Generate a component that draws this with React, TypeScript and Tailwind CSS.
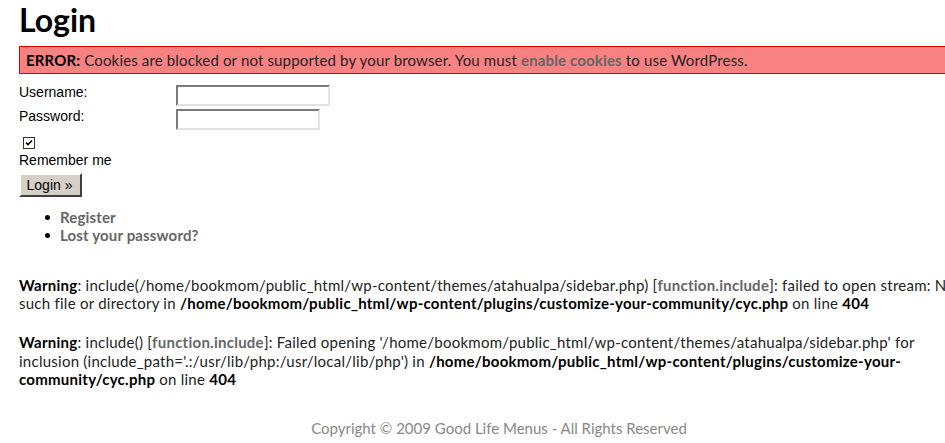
import React from 'react';

const body = { fontFamily: 'Lato, "Open Sans", sans-serif' };
const arial = { fontFamily: '"Liberation Sans", Arial, sans-serif' };

const inputCls =
    'h-[21px] bg-white border-2 border-t-[#7a7a7a] border-l-[#7a7a7a] border-b-[#e3e3e3] border-r-[#e3e3e3]';

const App: React.FC = () => {
    return (
        <div className="w-[945px] h-[443px] overflow-hidden bg-white text-[#222] tracking-[0.15px]" style={body}>
            <div className="w-[960px] ml-[19px]">

                {/* Title */}
                <h1 className="pt-[1px] text-[32px] leading-[37px] font-bold text-black tracking-normal">Login</h1>

                {/* Error */}
                <div className="mt-[8px] h-[28px] border border-[#e00000] bg-[#f88282] pl-[6px] text-[15px] leading-[26px] whitespace-nowrap">
                    <b className="text-black">ERROR:</b> Cookies are blocked or not supported by your browser. You must{' '}
                    <b className="text-[#666]">enable cookies</b> to use WordPress.
                </div>

                {/* Form */}
                <div
                    className="mt-[11px] grid grid-cols-[157px_auto] gap-y-[3px] text-[14px] leading-[14px] text-black tracking-normal"
                    style={arial}
                >
                    <div>Username:</div>
                    <div className={`${inputCls} w-[154px]`} />
                    <div>Password:</div>
                    <div className={`${inputCls} w-[144px]`} />
                </div>

                <div className="mt-[7px] ml-[4px] w-[12px] h-[12px] border border-[#333] bg-white flex items-center justify-center">
                    <svg width="8" height="8" viewBox="0 0 8 8">
                        <path d="M1 3.5 L3 5.5 L7 1.5" stroke="#000" strokeWidth="1.6" fill="none" />
                    </svg>
                </div>

                <div className="mt-[2px] text-[14px] leading-[18px] text-black tracking-normal" style={arial}>Remember me</div>

                <button
                    className="mt-[4px] w-[63px] h-[24px] bg-[#d4d0c8] border-2 border-t-white border-l-white border-b-[#404040] border-r-[#404040] text-[14px] text-black pr-[2px] tracking-normal"
                    style={arial}
                >
                    Login »
                </button>

                {/* Links */}
                <ul className="mt-[11px] text-[15px] leading-[18px] font-bold text-[#666]">
                    {['Register', 'Lost your password?'].map((item) => (
                        <li key={item} className="flex items-center">
                            <span className="ml-[26px] w-[5px] h-[5px] rounded-full bg-black" />
                            <span className="ml-[10px]">{item}</span>
                        </li>
                    ))}
                </ul>

                {/* PHP warnings */}
                <p className="mt-[32px] text-[15px] leading-[18px] whitespace-nowrap tracking-[0.25px]">
                    <b className="text-black">Warning</b>: include(/home/bookmom/public_html/wp-content/themes/atahualpa/sidebar.php){' '}
                    [<b className="text-[#666]">function.include</b>]: failed to open stream: No
                    <br />
                    such file or directory in{' '}
                    <b className="text-black">/home/bookmom/public_html/wp-content/plugins/customize-your-community/cyc.php</b> on line{' '}
                    <b className="text-black">404</b>
                </p>

                <p className="mt-[21px] text-[15px] leading-[18.5px] whitespace-nowrap tracking-[0.25px]">
                    <b className="text-black">Warning</b>: include() [<b className="text-[#666]">function.include</b>]: Failed opening
                    '/home/bookmom/public_html/wp-content/themes/atahualpa/sidebar.php' for
                    <br />
                    inclusion (include_path='.:/usr/lib/php:/usr/local/lib/php') in{' '}
                    <b className="text-black">/home/bookmom/public_html/wp-content/plugins/customize-your-</b>
                    <br />
                    <b className="text-black">community/cyc.php</b> on line <b className="text-black">404</b>
                </p>

                {/* Footer */}
                <div className="mt-[30px] text-center text-[15px] leading-[18px] text-[#888] tracking-normal">
                    Copyright © 2009 Good Life Menus - All Rights Reserved
                </div>

            </div>
        </div>
    );
};

export default App;
